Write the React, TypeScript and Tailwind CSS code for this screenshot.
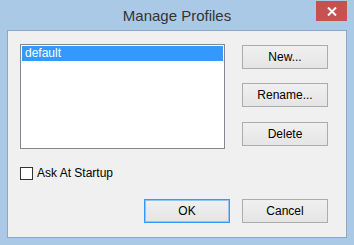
export default function App() {
  return (
    <div
      className="w-[354px] h-[245px] bg-[#aac9e7] flex flex-col px-[7px] pb-[7px]"
      style={{ fontFamily: '"Liberation Sans", Arial, sans-serif' }}
    >
      {/* Title bar */}
      <div className="relative h-[30px] flex justify-center pt-[8px]">
        <span className="text-[15px] leading-[15px] text-[#333333]">Manage Profiles</span>
        <button className="absolute right-0 top-[1px] w-[31px] h-[20px] bg-[#c75050] flex items-center justify-center">
          <svg width="10" height="9" viewBox="0 0 10 9">
            <path d="M1 0.5 L9 8.5 M9 0.5 L1 8.5" stroke="#ffffff" strokeWidth="2" />
          </svg>
        </button>
      </div>

      {/* Client area */}
      <div className="flex-1 flex flex-col border border-[#8aa7c8] bg-[#f0f0f0] pl-[12px] pr-[18px] pt-[13px]">
        <div className="flex">
          <div className="w-[205px] h-[105px] border border-[#828790] bg-white p-[1px]">
            <div className="h-[15px] bg-[#3399ff] text-white text-[12px] leading-[15px] pl-[3px]">default</div>
          </div>
          <div className="ml-[17px] mt-[1px] flex flex-col">
            <DialogButton label="New..." />
            <DialogButton label="Rename..." className="mt-[14px]" />
            <DialogButton label="Delete" className="mt-[15px]" />
          </div>
        </div>

        <div className="flex items-center mt-[18px]">
          <div className="w-[13px] h-[13px] border border-[#333333] bg-white" />
          <span className="ml-[4px] text-[12px] leading-[13px] text-black">Ask At Startup</span>
        </div>

        <div className="flex justify-end gap-[12px] mt-[19px]">
          <DialogButton label="OK" primary />
          <DialogButton label="Cancel" />
        </div>
      </div>
    </div>
  );
}

const DialogButton = ({ label, primary, className }: {
  label: string;
  primary?: boolean;
  className?: string;
}) => (
  <button
    className={`w-[86px] h-[24px] text-[12px] text-black bg-gradient-to-b from-[#f0f0f0] to-[#e5e5e5] flex items-center justify-center ${
      primary ? "border border-[#3399ff] shadow-[inset_0_0_0_1px_#8cc4fb]" : "border border-[#acacac]"
    } ${className || ""}`}
  >
    {label}
  </button>
);
